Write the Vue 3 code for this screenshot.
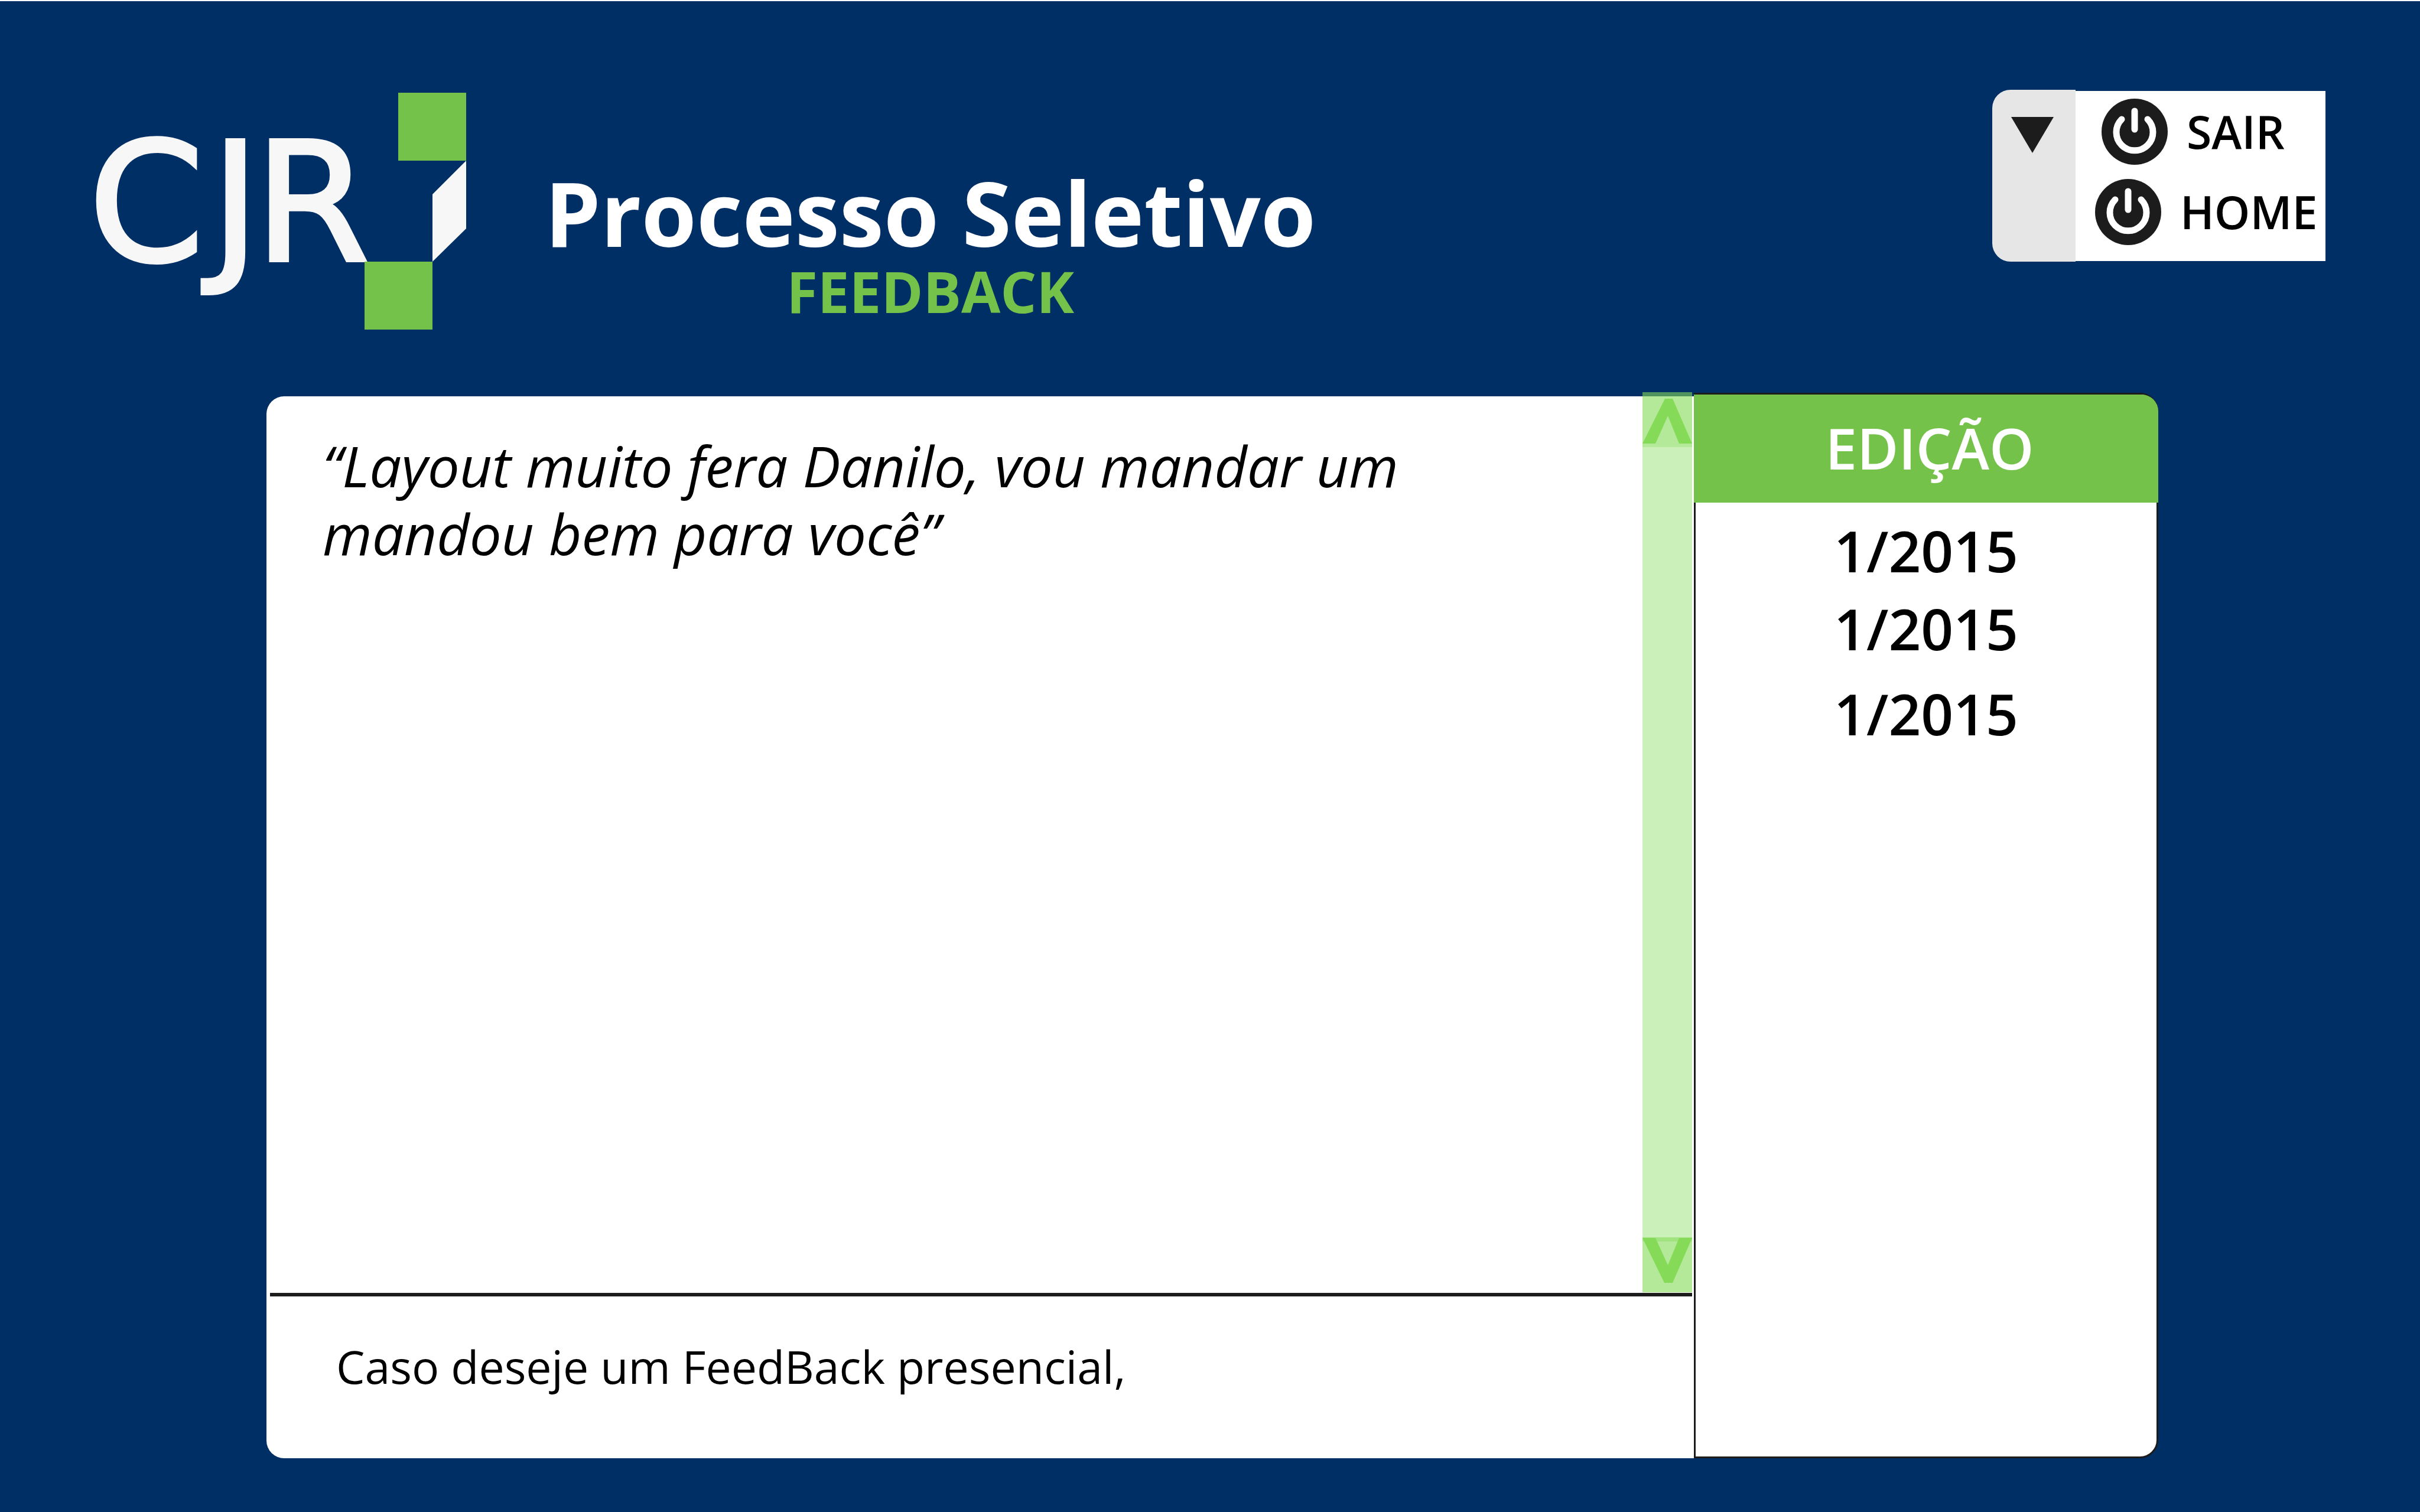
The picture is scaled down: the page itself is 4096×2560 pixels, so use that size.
<script setup>
import { ref } from 'vue'

const edicoes = ref(['1/2015', '1/2015', '1/2015'])
const acoes = [
  { id: 'sair', rotulo: 'SAIR' },
  { id: 'home', rotulo: 'HOME' },
]
</script>

<template>
  <div class="page">
    <header class="header">
      <svg class="logo" viewBox="0 0 632 402" role="img" aria-label="CJR">
        <text class="logo-text" x="-8 199 273" y="284">CJR</text>
        <rect class="logo-green" x="516" y="0" width="115" height="115" />
        <rect class="logo-green" x="459" y="286" width="115" height="115" />
        <polygon class="logo-white" points="631,115 631,230 574,286 574,172" />
      </svg>

      <div class="heading">
        <h1 class="title">Processo Seletivo</h1>
        <p class="subtitle">FEEDBACK</p>
      </div>

      <nav class="menu">
        <button class="menu-toggle" type="button" aria-label="Menu">
          <svg class="triangle" viewBox="0 0 72 61"><polygon points="0,0 72,0 36,61" /></svg>
        </button>
        <div class="menu-list">
          <a v-for="acao in acoes" :key="acao.id" class="menu-item" :class="acao.id" :href="'#' + acao.id">
            <svg class="power" viewBox="0 0 112 112" aria-hidden="true">
              <circle cx="56" cy="56" r="56" />
              <path d="M34 35A31 31 0 1 0 78 35M56 21V52" />
            </svg>
            <span>{{ acao.rotulo }}</span>
          </a>
        </div>
      </nav>
    </header>

    <main class="board">
      <section class="feedback">
        <div class="message">
          <blockquote class="quote">“Layout muito fera Danilo, vou mandar um mandou bem para você”</blockquote>
          <div class="scrollbar">
            <button class="scroll-button" type="button" aria-label="Subir">
              <svg viewBox="0 0 84 93"><polygon points="38,11 51,11 84,87 62,87 43,40 22,87 0,87" /></svg>
            </button>
            <div class="scroll-track"></div>
            <button class="scroll-button" type="button" aria-label="Descer">
              <svg viewBox="0 0 84 93"><polygon points="0,1 22,1 43,47 62,1 84,1 51,77 37,77" /></svg>
            </button>
          </div>
        </div>
        <hr class="divider" />
        <p class="note">Caso deseje um FeedBack presencial,</p>
      </section>

      <aside class="editions">
        <h2 class="editions-title">EDIÇÃO</h2>
        <ul class="editions-list">
          <li v-for="(edicao, i) in edicoes" :key="i">
            <a href="#edicao">{{ edicao }}</a>
          </li>
        </ul>
      </aside>
    </main>
  </div>
</template>

<style>
body {
  margin: 0;
}
</style>

<style scoped>
.page {
  box-sizing: border-box;
  min-height: 100vh;
  display: flex;
  flex-direction: column;
  border-top: 2px solid #ffffff;
  background: #002f66;
  color: #000000;
  font-family: "Open Sans", sans-serif;
}

a {
  color: inherit;
  text-decoration: none;
}

button {
  margin: 0;
  padding: 0;
  border: 0;
  cursor: pointer;
}

svg {
  display: block;
}

.header {
  display: flex;
  align-items: flex-start;
  padding: 150px 160px 0 158px;
}

.logo {
  flex: none;
  width: 632px;
  height: 402px;
  margin-top: 5px;
  overflow: visible;
}

.logo-text {
  font-family: "DejaVu Sans", sans-serif;
  font-size: 280px;
  fill: #f7f7f7;
  stroke: #f7f7f7;
  stroke-width: 6px;
}

.logo-green {
  fill: #74c24a;
}

.logo-white {
  fill: #f7f7f7;
}

.heading {
  margin: 131px 0 0 132px;
  text-align: center;
  font-weight: 700;
}

.title {
  margin: 0;
  font-size: 151px;
  line-height: 154px;
  color: #ffffff;
}

.subtitle {
  margin: 0;
  font-size: 96px;
  line-height: 112px;
  color: #74c24a;
}

.menu {
  display: flex;
  align-items: center;
  margin-left: auto;
}

.menu-toggle {
  display: flex;
  justify-content: center;
  align-items: flex-start;
  box-sizing: border-box;
  width: 141px;
  height: 291px;
  padding: 46px 6px 0 0;
  border-radius: 31px 0 0 31px;
  background: #e6e6e6;
}

.triangle {
  width: 72px;
  height: 61px;
  fill: #1c1c1c;
}

.menu-list {
  box-sizing: border-box;
  display: flex;
  flex-direction: column;
  gap: 24px;
  width: 423px;
  height: 288px;
  padding: 13px 0 0 33px;
  background: #ffffff;
}

.menu-item {
  display: flex;
  align-items: center;
  gap: 32px;
  font-size: 77px;
  line-height: 112px;
  font-weight: 600;
}

.menu-item.sair {
  padding-left: 11px;
}

.power {
  flex: none;
  width: 112px;
  height: 112px;
  fill: #1c1c1c;
}

.power path {
  fill: none;
  stroke: #ffffff;
  stroke-width: 11px;
  stroke-linecap: round;
}

.board {
  flex: 1;
  display: flex;
  margin-top: 106px;
  padding: 0 443px 91px 451px;
}

.feedback {
  flex: 1;
  display: flex;
  flex-direction: column;
  margin-top: 6px;
  border-radius: 30px 0 0 30px;
  background: #ffffff;
}

.message {
  flex: 1;
  display: flex;
  justify-content: space-between;
  padding: 0 3px 0 95px;
}

.quote {
  max-width: 1900px;
  margin: 59px 0 0;
  font-size: 96px;
  line-height: 115px;
  font-style: italic;
}

.scrollbar {
  display: flex;
  flex-direction: column;
  width: 84px;
  margin: -7px 0 1px;
}

.scroll-button {
  height: 93px;
  background: rgba(132, 218, 86, 0.6);
}

.scroll-button svg {
  position: relative;
  width: 84px;
  height: 93px;
  fill: #85da57;
}

.scroll-track {
  flex: 1;
  margin-bottom: -7px;
  background: rgba(132, 218, 86, 0.41);
}

.divider {
  height: 6px;
  margin: 0 3px 0 6px;
  border: 0;
  background: #1c1c1c;
}

.note {
  margin: 0;
  padding: 66px 0 103px 118px;
  font-size: 77px;
  line-height: 105px;
}

.editions {
  box-sizing: border-box;
  width: 786px;
  border: 3px solid #1c1c1c;
  border-radius: 0 31px 31px 0;
  background: #ffffff;
}

.editions-title {
  margin: 0 -3px;
  padding: 0 0 3px 12px;
  border-radius: 0 28px 0 0;
  background: #74c24a;
  color: #ffffff;
  font-size: 96px;
  line-height: 180px;
  font-weight: 600;
  text-align: center;
}

.editions-list {
  margin: 0;
  padding: 15px 0 0;
  list-style: none;
  font-size: 96px;
  line-height: 132px;
  font-weight: 600;
  text-align: center;
}

.editions-list li:last-child {
  margin-top: 12px;
}
</style>
